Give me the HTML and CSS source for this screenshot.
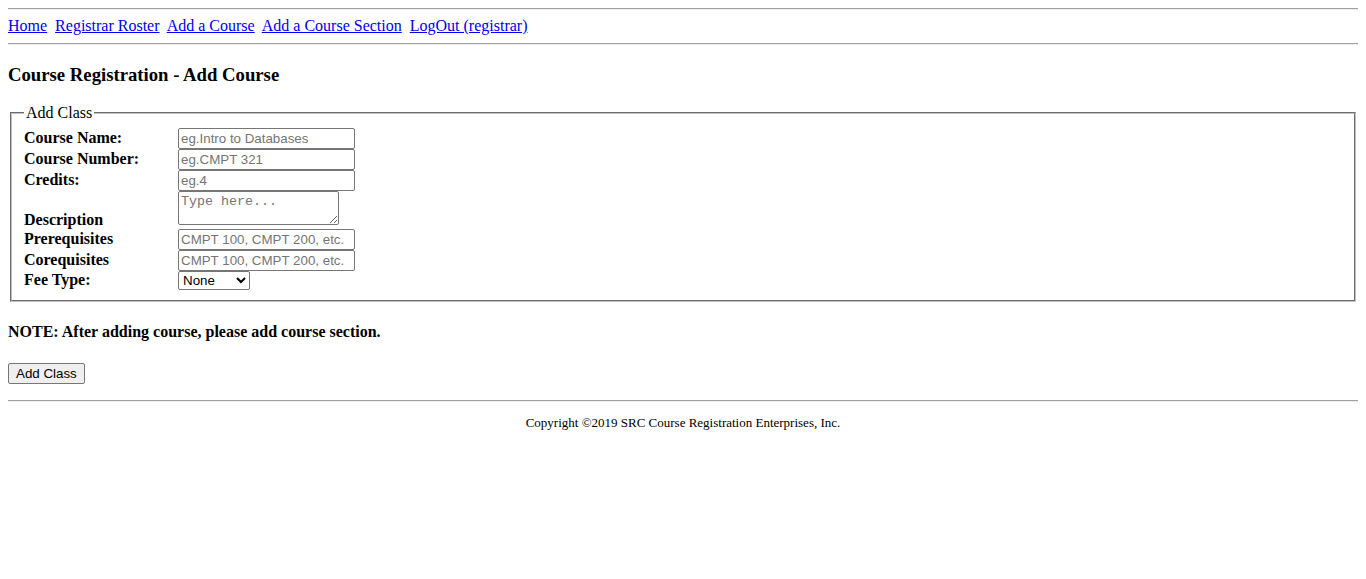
FILE: index.html
```html
<!DOCTYPE html>
<html>
<head>
<meta charset="utf-8">
<title>Course Registration - Add Course</title>
<link rel="stylesheet" href="styles.css">
</head>
<body class="page">
<hr class="rule rule-top">
<nav class="nav"><a href="#">Home</a>&nbsp; <a href="#">Registrar Roster</a>&nbsp; <a href="#">Add a Course</a>&nbsp; <a href="#">Add a Course Section</a>&nbsp; <a href="#">LogOut (registrar)</a></nav>
<hr class="rule">
<h3 class="title">Course Registration - Add Course</h3>
<form class="form">
<fieldset class="box">
<legend class="legend">Add Class</legend>
<label class="lbl">Course Name:</label> <input class="field" type="text" placeholder="eg.Intro to Databases"><br>
<label class="lbl">Course Number:</label> <input class="field" type="text" placeholder="eg.CMPT 321"><br>
<label class="lbl">Credits:</label> <input class="field" type="text" placeholder="eg.4"><br>
<label class="lbl">Description</label> <textarea class="area" placeholder="Type here..."></textarea><br>
<label class="lbl">Prerequisites</label> <input class="field" type="text" placeholder="CMPT 100, CMPT 200, etc."><br>
<label class="lbl">Corequisites</label> <input class="field" type="text" placeholder="CMPT 100, CMPT 200, etc."><br>
<label class="lbl">Fee Type:</label> <select class="sel"><option>None</option><option>Lab Fee</option><option>Material Fee</option></select>
</fieldset>
<h4 class="note">NOTE: After adding course, please add course section.</h4>
<button class="btn" type="button">Add Class</button>
</form>
<hr class="rule">
<p class="footer">Copyright ©2019 SRC Course Registration Enterprises, Inc.</p>
</body>
</html>
```
FILE: styles.css
```css
.page {
  margin: 8px;
  font-family: "Liberation Serif", "Times New Roman", serif;
  font-size: 16px;
  color: #000;
  background: #fff;
}
.rule {
  margin: 8px 0;
  border: 0;
  border-top: 1px solid #a0a0a0;
  border-bottom: 1px solid #eeeeee;
  height: 0;
}
.rule-top {
  margin-top: 0;
  margin-bottom: 7px;
}
.nav a {
  color: #0000ee;
}
.title {
  font-size: 18.72px;
  font-weight: bold;
  margin: 18.72px 0;
}
.form {
  margin: 0 0 16px;
}
.box {
  margin: 0 2px;
  padding: 5.6px 12px 10px;
  border: 2px groove #c0c0c0;
}
.legend {
  padding: 0 2px;
  font-size: 16px;
}
.lbl {
  display: inline-block;
  width: 150px;
  font-weight: bold;
}
.field {
  font-family: "Liberation Sans", Arial, sans-serif;
  font-size: 13.333px;
  width: 171px;
  height: 17px;
  padding: 1px 2px;
  border: 1px solid #767676;
  border-radius: 2px;
  margin: 0;
  box-sizing: content-box;
}
.field::placeholder {
  color: #757575;
}
.area {
  font-family: "Liberation Mono", "DejaVu Sans Mono", monospace;
  font-size: 13.333px;
  width: 155px;
  height: 28px;
  padding: 2px;
  border: 1px solid #767676;
  border-radius: 2px;
  margin: 0;
  vertical-align: baseline;
}
.area::placeholder {
  color: #757575;
}
.sel {
  font-family: "Liberation Sans", Arial, sans-serif;
  font-size: 13.333px;
  width: 72px;
  height: 19px;
  border: 1px solid #767676;
  border-radius: 2px;
  background: #fff;
  margin: 0;
}
.note {
  font-size: 16px;
  font-weight: bold;
  margin: 21.28px 0;
}
.btn {
  font-family: "Liberation Sans", Arial, sans-serif;
  font-size: 13.333px;
  height: 21px;
  padding: 1px 7px;
  border: 1px solid #767676;
  border-radius: 2px;
  background: #efefef;
  color: #000;
  margin: 0;
}
.footer {
  text-align: center;
  font-size: 13px;
  margin: 13px 0;
}
```
